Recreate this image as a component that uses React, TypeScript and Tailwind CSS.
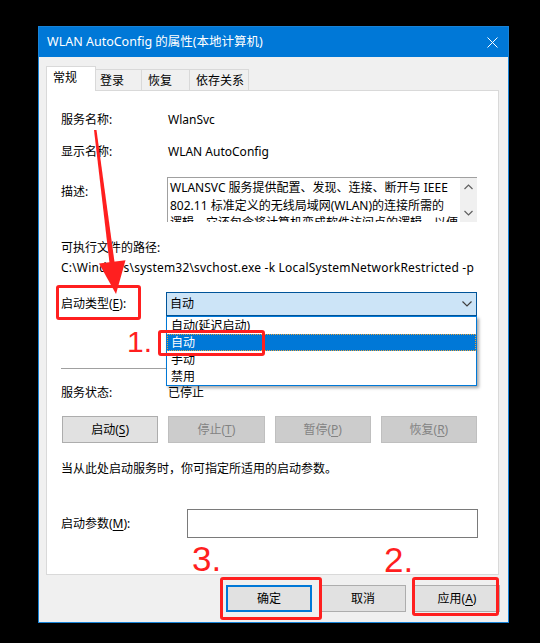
import React from 'react';

const font = "font-['Noto_Sans','Noto_Sans_CJK_SC',sans-serif]";

function U({ children }: { children: React.ReactNode }) {
  return <span className="underline underline-offset-[2px]">{children}</span>;
}

function Row({ label, children, className = '' }: { label: React.ReactNode; children?: React.ReactNode; className?: string }) {
  return (
    <div className={`flex items-center ${className}`}>
      <div className="w-[106px] shrink-0">{label}</div>
      {children}
    </div>
  );
}

function SvcButton({ children, enabled }: { children: React.ReactNode; enabled?: boolean }) {
  return (
    <div
      className={`flex h-[27px] items-center justify-center border ${
        enabled ? 'border-[#adadad] bg-[#e1e1e1] text-black' : 'border-[#bfbfbf] bg-[#cccccc] text-[#838383]'
      }`}
    >
      {children}
    </div>
  );
}

function DialogButton({ children, primary }: { children: React.ReactNode; primary?: boolean }) {
  return (
    <div
      className={`flex h-[27px] w-[86px] items-center justify-center bg-[#e1e1e1] ${
        primary ? 'border-2 border-[#0078d7]' : 'border border-[#adadad]'
      }`}
    >
      {children}
    </div>
  );
}

function Chevron({ up }: { up?: boolean }) {
  return (
    <svg width="9" height="6" viewBox="0 0 9 6">
      <polyline
        points={up ? '0.5,5 4.5,1 8.5,5' : '0.5,1 4.5,5 8.5,1'}
        fill="none"
        stroke="#606060"
        strokeWidth="1.2"
      />
    </svg>
  );
}

export default function App() {
  const items = ['自动(延迟启动)', '自动', '手动', '禁用'];

  return (
    <div className={`relative h-[643px] w-[540px] overflow-hidden bg-black pl-[38px] pt-[26px] text-[12px] text-black ${font}`}>
      {/* window */}
      <div className="flex h-[597px] w-[471px] flex-col border border-[#1883d7] bg-[#f0f0f0]">
        <div className="flex h-[30px] shrink-0 items-center justify-between bg-[#0078d7] pl-[8px] pr-[10px] text-white">
          <span className="text-[12.5px]">WLAN AutoConfig 的属性(本地计算机)</span>
          <svg width="11" height="11" viewBox="0 0 11 11">
            <path d="M0.5 0.5 L10.5 10.5 M10.5 0.5 L0.5 10.5" stroke="white" strokeWidth="1" />
          </svg>
        </div>

        {/* tabs */}
        <div className="-mb-px mt-[9px] flex h-[25px] items-end pl-[7px]">
          <div className="relative z-10 h-[25px] w-[50px] border border-b-0 border-[#d9d9d9] bg-white pl-[6px] pt-[2px]">
            常规
          </div>
          <div className="h-[22px] w-[46px] border-r border-t border-[#d9d9d9] pl-[4px] pt-[2px]">登录</div>
          <div className="h-[22px] w-[48px] border-r border-t border-[#d9d9d9] pl-[6px] pt-[2px]">恢复</div>
          <div className="h-[22px] w-[59px] border-r border-t border-[#d9d9d9] pl-[6px] pt-[2px]">依存关系</div>
        </div>

        {/* page */}
        <div className="ml-[7px] flex h-[485px] w-[453px] flex-col border border-[#d9d9d9] bg-white pl-[14px] pr-[20px]">
          <Row label="服务名称:" className="mt-[19px] h-5">
            <span className="pl-px">WlanSvc</span>
          </Row>
          <Row label="显示名称:" className="mt-[12px] h-5">
            <span className="pl-px">WLAN AutoConfig</span>
          </Row>
          <div className="mt-[15px] flex h-[45px] items-start">
            <div className="w-[106px] shrink-0 pt-[6px]">描述:</div>
            <div className="flex h-[45px] w-[310px] border-l border-t border-[#a0a0a0]">
              <div className="flex-1 overflow-hidden pl-[2px] pt-[1px] leading-[17.5px]">
                <div className="whitespace-nowrap">WLANSVC 服务提供配置、发现、连接、断开与 IEEE</div>
                <div className="whitespace-nowrap">802.11 标准定义的无线局域网(WLAN)的连接所需的</div>
                <div className="whitespace-nowrap">逻辑。它还包含将计算机变成软件访问点的逻辑，以便</div>
              </div>
              <div className="flex w-[17px] shrink-0 flex-col items-center justify-between bg-[#f0f0f0] py-[6px]">
                <Chevron up />
                <Chevron />
              </div>
            </div>
          </div>
          <div className="mt-[16px] flex h-5 items-center">可执行文件的路径:</div>
          <div className="flex h-5 items-center whitespace-nowrap tracking-[0.2px]">
            C:\Windows\system32\svchost.exe -k LocalSystemNetworkRestricted -p
          </div>
          <div className="mt-[14px] flex h-[24px] items-center">
            <div className="w-[105px] shrink-0">
              启动类型(<U>E</U>):
            </div>
            <div className="relative h-[24px] w-[311px]">
              <div className="flex h-full items-center justify-between border border-[#005499] bg-[#cce4f7] pl-[3px] pr-[4px]">
                <span>自动</span>
                <svg width="10" height="6" viewBox="0 0 10 6">
                  <polyline points="0.5,0.5 5,5 9.5,0.5" fill="none" stroke="#404040" strokeWidth="1.2" />
                </svg>
              </div>
              <div className="absolute left-0 top-full z-20 w-[311px] border border-[#0078d7] bg-white shadow-[2px_2px_3px_rgba(0,0,0,0.35)]">
                {items.map((item, i) => (
                  <div
                    key={item}
                    className={`h-[17px] pl-[3px] leading-[15px] ${
                      i === 1 ? 'border border-dotted border-[#e8a33d] bg-[#0078d7] text-white' : 'border border-transparent'
                    }`}
                  >
                    {item}
                  </div>
                ))}
              </div>
            </div>
          </div>
          <div className="mt-[52px] h-px w-[416px] bg-[#a0a0a0]" />
          <Row label="服务状态:" className="mt-[14px] h-5">
            <span className="pl-px">已停止</span>
          </Row>
          <div className="mt-[13px] grid w-[416px] grid-cols-4 gap-[10px] pl-px">
            <SvcButton enabled>
              启动(<U>S</U>)
            </SvcButton>
            <SvcButton>
              停止(<U>T</U>)
            </SvcButton>
            <SvcButton>
              暂停(<U>P</U>)
            </SvcButton>
            <SvcButton>
              恢复(<U>R</U>)
            </SvcButton>
          </div>
          <div className="mt-[16px] flex h-5 items-center">当从此处启动服务时，你可指定所适用的启动参数。</div>
          <div className="mt-[30px] flex h-[29px] items-center">
            <div className="w-[126px] shrink-0">
              启动参数(<U>M</U>):
            </div>
            <div className="h-[29px] w-[291px] border border-[#7a7a7a] bg-white" />
          </div>
        </div>

        {/* dialog buttons */}
        <div className="mt-[10px] flex justify-end gap-[8px] pr-[8px]">
          <DialogButton primary>确定</DialogButton>
          <DialogButton>取消</DialogButton>
          <DialogButton>
            应用(<U>A</U>)
          </DialogButton>
        </div>
      </div>

      {/* red annotations */}
      <div className="pointer-events-none absolute inset-0 z-30 font-['Liberation_Sans',sans-serif] text-[#ff1f1f]">
        <svg className="absolute left-0 top-0" width="540" height="643" viewBox="0 0 540 643">
          <polygon points="94,130 96.5,130 114.5,262 109.5,263" fill="#ff1f1f" />
          <polygon points="99,263.5 125.5,260.2 116,294" fill="#ff1f1f" />
        </svg>
        <div className="absolute left-[56px] top-[285px] h-[35px] w-[85px] rounded-[3px] border-[3px] border-[#ff1f1f]" />
        <div className="absolute left-[158px] top-[330px] h-[26px] w-[107px] rounded-[3px] border-[3px] border-[#ff1f1f]" />
        <div className="absolute left-[220px] top-[577px] h-[43px] w-[102px] rounded-[3px] border-[3px] border-[#ff1f1f]" />
        <div className="absolute left-[412px] top-[577px] h-[39px] w-[87px] rounded-[3px] border-[3px] border-[#ff1f1f]" />
        <div className="absolute left-[127px] top-[327px] text-[30px] leading-none">1.</div>
        <div className="absolute left-[384px] top-[542px] text-[35px] leading-none">2.</div>
        <div className="absolute left-[192px] top-[541px] text-[35px] leading-none">3.</div>
      </div>
    </div>
  );
}
